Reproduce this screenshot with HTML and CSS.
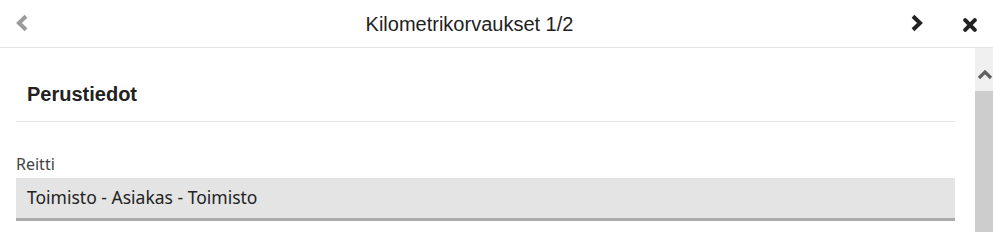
FILE: index.html
```html
<!DOCTYPE html>
<html lang="fi">
<head>
<meta charset="utf-8">
<title>Kilometrikorvaukset</title>
<link rel="stylesheet" href="styles.css">
</head>
<body>
<div class="page">
  <header class="header">
    <button class="nav-btn prev" aria-label="Edellinen">
      <svg width="13" height="18" viewBox="0 0 13 18"><polyline points="11,2.3 4,9 11,15.7" fill="none" stroke="#9b9b9b" stroke-width="4" stroke-linejoin="miter"/></svg>
    </button>
    <div class="title">Kilometrikorvaukset 1/2</div>
    <div class="right-btns">
      <button class="nav-btn next" aria-label="Seuraava">
        <svg width="13" height="18" viewBox="0 0 13 18"><polyline points="2,2.3 9,9 2,15.7" fill="none" stroke="#222" stroke-width="4" stroke-linejoin="miter"/></svg>
      </button>
      <button class="nav-btn close" aria-label="Sulje">
        <svg width="14" height="14" viewBox="0 0 14 14"><path d="M2.2 2.2 L11.8 11.8 M11.8 2.2 L2.2 11.8" fill="none" stroke="#222" stroke-width="4" stroke-linecap="round"/></svg>
      </button>
    </div>
  </header>
  <div class="main">
    <div class="content">
      <h2 class="section-title">Perustiedot</h2>
      <div class="field">
        <label class="field-label">Reitti</label>
        <div class="field-input">Toimisto - Asiakas - Toimisto</div>
      </div>
    </div>
    <div class="scrollbar">
      <div class="scroll-up">
        <svg width="16" height="11" viewBox="0 0 16 11"><polyline points="2,9 8,3 14,9" fill="none" stroke="#606060" stroke-width="3.2"/></svg>
      </div>
      <div class="scroll-thumb"></div>
    </div>
  </div>
</div>
</body>
</html>
```
FILE: styles.css
```css
html, body {
  margin: 0;
  padding: 0;
  background: #fff;
  height: 100%;
  overflow: hidden;
}
.page {
  display: flex;
  flex-direction: column;
  height: 232px;
  font-family: "Liberation Sans", Arial, sans-serif;
  color: #222;
}
.header {
  height: 47px;
  flex: 0 0 47px;
  border-bottom: 1px solid #e6e6e6;
  display: flex;
  align-items: center;
}
.nav-btn {
  background: none;
  border: 0;
  padding: 0;
  margin: 0;
  display: flex;
  align-items: center;
  cursor: pointer;
}
.prev {
  margin-left: 15px;
  margin-top: -2px;
}
.title {
  flex: 1;
  text-align: center;
  font-size: 20px;
  line-height: 24px;
  color: #222;
}
.right-btns {
  display: flex;
  align-items: center;
  margin-right: 16px;
}
.next {
  margin-right: 39px;
  margin-top: -2px;
}
.close {
  margin-top: 3px;
}
.main {
  flex: 1;
  display: flex;
  min-height: 0;
}
.content {
  flex: 1;
  padding: 34px 20px 0 16px;
}
.section-title {
  margin: 0;
  padding: 0 0 15px 11px;
  font-size: 20px;
  line-height: 24px;
  font-weight: bold;
  color: #222;
  border-bottom: 1px solid #e6e6e6;
}
.field {
  margin-top: 32px;
  display: flex;
  flex-direction: column;
}
.field-label {
  font-family: "Noto Sans", "Open Sans", sans-serif;
  font-size: 16px;
  line-height: 21px;
  color: #444;
  margin-bottom: 3px;
}
.field-input {
  font-family: "Noto Sans", "Open Sans", sans-serif;
  font-size: 17.5px;
  line-height: 24px;
  color: #222;
  background: #e4e4e4;
  padding: 7px 11px 9px;
  border-bottom: 3px solid #ababab;
}
.scrollbar {
  width: 18px;
  flex: 0 0 18px;
  display: flex;
  flex-direction: column;
}
.scroll-up {
  height: 43px;
  background: #f0f0f0;
  display: flex;
  align-items: flex-start;
  padding-top: 21px;
  padding-left: 2px;
  box-sizing: border-box;
}
.scroll-thumb {
  flex: 1;
  background: #cdcdcd;
}
```
